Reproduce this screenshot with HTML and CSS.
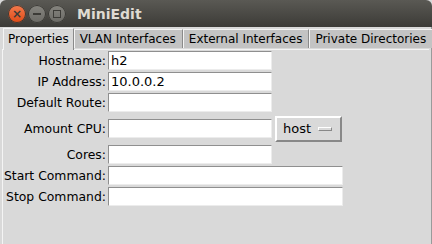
FILE: index.html
```html
<!DOCTYPE html>
<html lang="en">
<head>
    <meta charset="UTF-8">
    <title>MiniEdit</title>
    <link rel="stylesheet" href="styles.css">
</head>
<body>
    <div class="window">
        <!-- Title bar -->
        <div class="titlebar">
            <div class="controls">
                <span class="ctl close">&times;</span>
                <span class="ctl min"><i class="dash"></i></span>
                <span class="ctl max"><i class="box"></i></span>
            </div>
            <div class="title">MiniEdit</div>
        </div>

        <!-- Notebook -->
        <div class="notebook">
            <div class="tabs">
                <div class="tab active">Properties</div>
                <div class="tab">VLAN Interfaces</div>
                <div class="tab">External Interfaces</div>
                <div class="tab">Private Directories</div>
            </div>

            <div class="pane">
                <div class="form">
                    <label>Hostname:</label>
                    <div class="field"><div class="entry short">h2</div></div>

                    <label>IP Address:</label>
                    <div class="field"><div class="entry short">10.0.0.2</div></div>

                    <label>Default Route:</label>
                    <div class="field"><div class="entry short"></div></div>

                    <label class="tall">Amount CPU:</label>
                    <div class="field tall">
                        <div class="entry short"></div>
                        <div class="menubutton">host <span class="indicator"></span></div>
                    </div>

                    <label>Cores:</label>
                    <div class="field"><div class="entry short"></div></div>

                    <label>Start Command:</label>
                    <div class="field"><div class="entry long"></div></div>

                    <label>Stop Command:</label>
                    <div class="field"><div class="entry long"></div></div>
                </div>
            </div>
        </div>
    </div>
</body>
</html>
```

FILE: styles.css
```css
/* Base */
* {
    margin: 0;
    padding: 0;
    box-sizing: border-box;
}

body {
    background-color: #d9d9d9;
    font-family: 'DejaVu Sans', sans-serif;
    font-size: 12px;
    color: #000;
    width: 432px;
    height: 244px;
    overflow: hidden;
}

.window {
    height: 244px;
    display: flex;
    flex-direction: column;
    background: #d9d9d9;
}

/* Title bar */
.titlebar {
    height: 27px;
    display: flex;
    align-items: center;
    background: linear-gradient(#5a5954, #3c3b37);
    border-radius: 6px 6px 0 0;
    padding-left: 8px;
}

.controls {
    display: flex;
    gap: 2px;
}

.ctl {
    width: 18px;
    height: 18px;
    border-radius: 50%;
    display: flex;
    align-items: center;
    justify-content: center;
    background: linear-gradient(#86857f, #6b6a65);
    box-shadow: inset 0 0 0 1px #3a3935;
}

.ctl.close {
    background: linear-gradient(#f37b4e, #df4a16);
    color: #3c3b37;
    font-size: 12px;
    font-weight: bold;
    line-height: 1;
}

.dash {
    width: 8px;
    height: 2px;
    background: #3c3b37;
}

.box {
    width: 8px;
    height: 8px;
    border: 1.5px solid #3c3b37;
}

.title {
    margin-left: 11px;
    color: #dfdbd2;
    font-weight: bold;
    font-size: 14px;
}

/* Notebook */
.notebook {
    flex: 1;
    display: flex;
    flex-direction: column;
    padding: 0 2px 0 2px;
    border-right: 1px solid #9a9a9a;
}

.tabs {
    display: flex;
    height: 22px;
    align-items: flex-end;
    padding-left: 1px;
}

.tab {
    height: 19px;
    padding: 1px 6px 0 5px;
    line-height: 17px;
    background: #c3c3c3;
    border-top: 1px solid #f4f4f4;
    border-left: 1px solid #f4f4f4;
    border-right: 1px solid #8a8a8a;
    margin-bottom: 1px;
    white-space: nowrap;
}

.tab.active {
    height: 22px;
    padding: 2px 4px 0 4px;
    background: #d9d9d9;
    margin-bottom: -1px;
    position: relative;
    z-index: 1;
}

.pane {
    flex: 1;
    border-top: 1px solid #f4f4f4;
    border-left: 1px solid #f4f4f4;
    padding-top: 1px;
}

/* Form */
.form {
    display: grid;
    grid-template-columns: 103px auto;
    row-gap: 2px;
    column-gap: 2px;
    align-items: center;
    font-size: 12.4px;
}

.form label {
    text-align: right;
    height: 19px;
    line-height: 19px;
    white-space: nowrap;
}

.field {
    display: flex;
    align-items: center;
    gap: 3px;
    height: 19px;
}

.form label.tall,
.field.tall {
    height: 29px;
    line-height: 29px;
}

.entry {
    height: 19px;
    background: #fff;
    border-top: 1px solid #8f8f8f;
    border-left: 1px solid #8f8f8f;
    border-right: 1px solid #ececec;
    border-bottom: 1px solid #ececec;
    padding-left: 2px;
    font-size: 13px;
    line-height: 17px;
}

.entry.short {
    width: 164px;
}

.entry.long {
    width: 235px;
}

.menubutton {
    width: 67px;
    height: 26px;
    display: flex;
    align-items: center;
    justify-content: space-between;
    padding: 0 8px 0 6px;
    background: #d9d9d9;
    border-top: 2px solid #fff;
    border-left: 2px solid #fff;
    border-right: 2px solid #888;
    border-bottom: 2px solid #888;
    font-size: 13px;
    line-height: 1;
}

.indicator {
    width: 14px;
    height: 4px;
    background: #d9d9d9;
    border-top: 1px solid #fff;
    border-left: 1px solid #fff;
    border-right: 1px solid #888;
    border-bottom: 1px solid #888;
}
```
